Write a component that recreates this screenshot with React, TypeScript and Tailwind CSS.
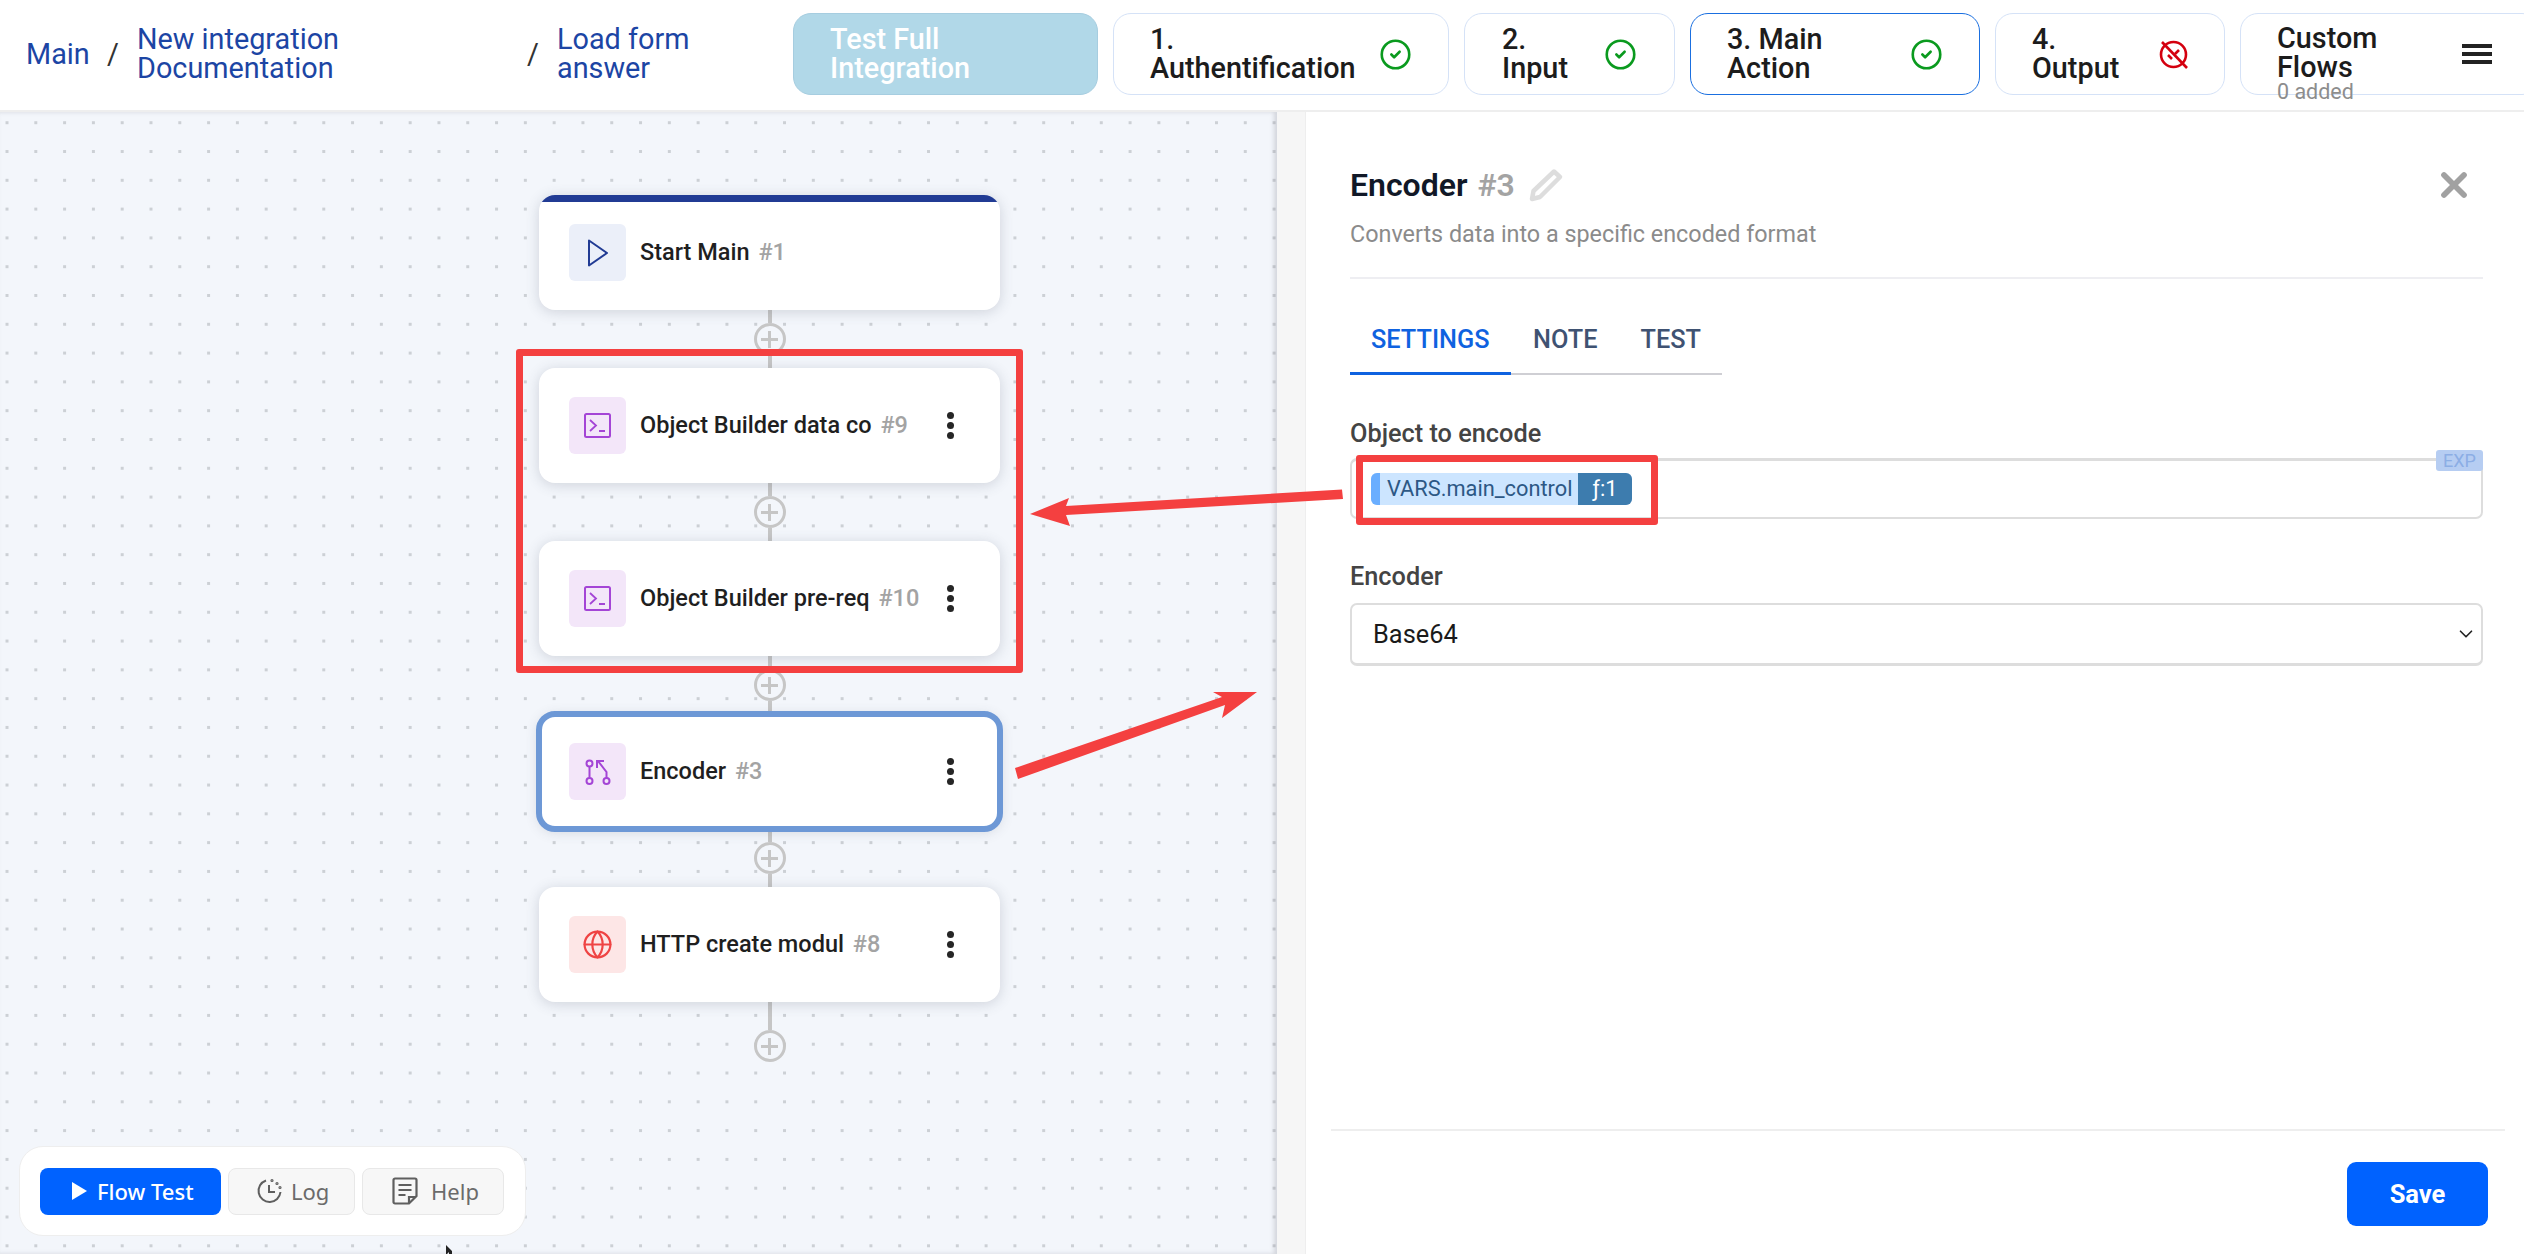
import { FC, ReactNode } from "react";
import { CircleCheck, Globe, X, ChevronDown } from "lucide-react";

const StepButton: FC<{
  className: string;
  active?: boolean;
  icon?: ReactNode;
  children: ReactNode;
}> = ({ className, active, icon, children }) => (
  <div
    className={`relative flex h-[82px] shrink-0 items-center justify-between rounded-[18px] border bg-white text-[#1c1c1c] ${
      active ? "border-[#1a6fe0]" : "border-[#d5e2f7]"
    } ${className}`}
  >
    <div className="text-[28.8px] font-medium leading-[28.8px]">{children}</div>
    {icon}
  </div>
);

const OkIcon = () => (
  <CircleCheck size={33} strokeWidth={1.9} className="text-[#0a9a1e]" />
);

const NoIcon = () => (
  <svg width="33" height="33" viewBox="0 0 33 33" fill="none" stroke="#d4000f" strokeWidth="2.6">
    <circle cx="16.5" cy="16.5" r="12.5" />
    <path d="M11 17l4 4M18 16l4-4" />
    <path d="M5 4l25 26" />
  </svg>
);

const Connector: FC<{ bottom?: boolean; top?: number }> = ({ bottom = true, top = 13 }) => (
  <div className="flex flex-col items-center">
    <div className="w-[4px] bg-[#c6c6c6]" style={{ height: top }} />
    <div className="relative flex h-[32px] w-[32px] items-center justify-center rounded-full border-[3.5px] border-[#c6c6c6] bg-[#f3f6fb]">
      <div className="h-[3px] w-[17px] bg-[#c6c6c6]" />
      <div className="absolute h-[17px] w-[3px] bg-[#c6c6c6]" />
    </div>
    {bottom && <div className="h-[13px] w-[4px] bg-[#c6c6c6]" />}
  </div>
);

const Kebab = () => (
  <div className="flex flex-col gap-[3px]">
    <div className="h-[7px] w-[7px] rounded-full bg-[#262626]" />
    <div className="h-[7px] w-[7px] rounded-full bg-[#262626]" />
    <div className="h-[7px] w-[7px] rounded-full bg-[#262626]" />
  </div>
);

const TerminalIcon = () => (
  <svg width="29" height="29" viewBox="0 0 29 29" fill="none" stroke="#a445d6" strokeWidth="2">
    <rect x="2" y="3" width="25" height="23" rx="1.5" />
    <path d="M7 9l6 5.5L7 20M16 20h6" strokeWidth="1.8" />
  </svg>
);

const BranchIcon = () => (
  <svg width="28" height="28" viewBox="0 0 28 28" fill="none" stroke="#a445d6" strokeWidth="2">
    <circle cx="5.500" cy="5.500" r="3" />
    <path d="M5.500 8.500v11" />
    <circle cx="5.500" cy="23" r="3" />
    <circle cx="22.500" cy="23" r="3" />
    <path d="M22.500 20V14L14 3" />
    <path d="M13 10V3h7" />
  </svg>
);

const FlowNode: FC<{
  tile: string;
  icon: ReactNode;
  name: string;
  num: string;
  kebab?: boolean;
  selected?: boolean;
  start?: boolean;
}> = ({ tile, icon, name, num, kebab = true, selected, start }) => (
  <div
    className={`relative flex h-[115px] w-[461px] items-center overflow-hidden rounded-[16px] bg-white pl-[30px] pr-[46px] shadow-[0_2px_14px_rgba(60,70,90,0.2)] ${
      selected ? "outline-6 -outline-offset-3 outline-[#6d98d6]" : ""
    }`}
  >
    {start && <div className="absolute inset-x-0 top-0 h-[7px] bg-[#213b94]" />}
    <div className={`flex h-[57px] w-[57px] shrink-0 items-center justify-center rounded-[6px] ${tile}`}>
      {icon}
    </div>
    <div className="ml-[14px] flex-1 whitespace-nowrap text-[23.5px] font-medium text-[#1f1f1f]">
      {name} <span className="ml-[3px] text-[#a3a3a3]">{num}</span>
    </div>
    {kebab && <Kebab />}
  </div>
);

const App: FC = () => {
  return (
    <div className="relative flex h-screen w-full flex-col overflow-hidden bg-white font-['Roboto',sans-serif]">
      {/* top bar */}
      <header className="flex h-[112px] shrink-0 items-center overflow-hidden border-b-2 border-[#eeeeee] pb-[2px] pl-[26px]">
        <div className="flex w-[767px] shrink-0 items-center text-[28.8px] leading-[28.8px] text-[#1c45a4]">
          <span className="w-[62px]">Main</span>
          <span className="ml-[19px] w-[30px] text-[#333]">/</span>
          <span className="w-[390px]">
            New integration
            <br />
            Documentation
          </span>
          <span className="w-[30px] text-[#333]">/</span>
          <span>
            Load form
            <br />
            answer
          </span>
        </div>
        <div className="flex gap-[15px]">
          <div className="flex h-[82px] w-[305px] shrink-0 items-center rounded-[18px] border border-[#a6cde0] bg-[#b1d8e8] pl-[36px] text-[28.8px] font-medium leading-[28.8px] text-white">
            <div>
              Test Full
              <br />
              Integration
            </div>
          </div>
          <StepButton className="w-[336px] pl-[36px] pr-[36px]" icon={<OkIcon />}>
            1.
            <br />
            Authentification
          </StepButton>
          <StepButton className="w-[211px] pl-[37px] pr-[37px]" icon={<OkIcon />}>
            2.
            <br />
            Input
          </StepButton>
          <StepButton className="w-[290px] pl-[36px] pr-[36px]" active icon={<OkIcon />}>
            3. Main
            <br />
            Action
          </StepButton>
          <StepButton className="w-[230px] pl-[36px] pr-[34px]" icon={<NoIcon />}>
            4.
            <br />
            Output
          </StepButton>
          <StepButton
            className="w-[300px] pl-[36px] pr-[47px]"
            icon={
              <div className="flex flex-col gap-[4.5px]">
                <div className="h-[3.5px] w-[30px] bg-[#222]" />
                <div className="h-[3.5px] w-[30px] bg-[#222]" />
                <div className="h-[3.5px] w-[30px] bg-[#222]" />
              </div>
            }
          >
            <div className="-translate-y-[1px]">
              Custom
              <br />
              Flows
            </div>
            <div className="absolute left-[36px] top-[67px] text-[21.5px] leading-[22px] font-normal text-[#8d8d8d]">
              0 added
            </div>
          </StepButton>
        </div>
      </header>

      <div className="flex min-h-0 flex-1">
        {/* canvas */}
        <main className="relative flex w-[1277px] shrink-0 flex-col bg-[#f3f6fb] bg-[radial-gradient(circle,#ccd0d5_1.6px,transparent_1.8px)] bg-size-[28.8px_28.8px] bg-position-[-7.4px_-3.7px] pl-[539px] pt-[83px] shadow-[inset_-3px_0_4px_rgba(120,120,130,0.25)]">
          <div className="flex w-[461px] flex-col items-center">
            <FlowNode
              start
              kebab={false}
              tile="bg-[#ebeff9]"
              name="Start Main"
              num="#1"
              icon={
                <svg width="24" height="28" viewBox="0 0 24 28" fill="none" stroke="#213b94" strokeWidth="2">
                  <path d="M3 1.5L21 14L3 26.5Z" strokeLinejoin="round" />
                </svg>
              }
            />
            <Connector />
            <FlowNode tile="bg-[#f3e6f9]" name="Object Builder data co" num="#9" icon={<TerminalIcon />} />
            <Connector />
            <FlowNode tile="bg-[#f3e6f9]" name="Object Builder pre-req" num="#10" icon={<TerminalIcon />} />
            <Connector />
            <FlowNode selected tile="bg-[#f3e6f9]" name="Encoder" num="#3" icon={<BranchIcon />} />
            <Connector />
            <FlowNode
              tile="bg-[#fde6e6]"
              name="HTTP create modul"
              num="#8"
              icon={<Globe size={31} strokeWidth={1.7} className="text-[#ef4444]" />}
            />
            <Connector bottom={false} top={28} />
          </div>

          {/* flow toolbar */}
          <div className="absolute bottom-[18px] left-[19px] flex h-[90px] w-[507px] items-center gap-[7px] rounded-[24px] border border-[#eeeeee] bg-white pl-[20px] font-['Noto_Sans',sans-serif] text-[22px]">
            <div className="flex h-[47px] w-[181px] items-center rounded-[8px] bg-[#0062ff] pl-[32px] font-medium text-white">
              <svg width="15" height="18" viewBox="0 0 15 18" fill="white">
                <path d="M0 0L15 9L0 18Z" />
              </svg>
              <span className="ml-[10px]">Flow Test</span>
            </div>
            <div className="flex h-[47px] w-[127px] items-center rounded-[8px] border border-[#e8e8e8] bg-[#f7f7f7] pl-[26px] text-[#6b6b6b]">
              <svg width="28" height="28" viewBox="0 0 28 28" fill="none" stroke="#5f5f5f" strokeWidth="2">
                <path d="M11 3.5A11 11 0 1 0 25.5 15" />
                <path d="M14 8v7h6" />
                <circle cx="17" cy="3.5" r="0.6" />
                <circle cx="22" cy="6.5" r="0.6" />
                <circle cx="25" cy="10.5" r="0.6" />
              </svg>
              <span className="ml-[8px]">Log</span>
            </div>
            <div className="flex h-[47px] w-[142px] items-center rounded-[8px] border border-[#e8e8e8] bg-[#f7f7f7] pl-[29px] text-[#6b6b6b]">
              <svg width="26" height="28" viewBox="0 0 26 28" fill="none" stroke="#5f5f5f" strokeWidth="2.2">
                <path d="M3 1.5H23a1.5 1.5 0 0 1 1.5 1.5V19L17 26.5H3A1.5 1.5 0 0 1 1.5 25V3A1.5 1.5 0 0 1 3 1.5Z" />
                <path d="M6.5 8h13M6.5 13h13M6.5 18h7" />
                <path d="M17 26V20h7" />
              </svg>
              <span className="ml-[13px]">Help</span>
            </div>
          </div>
        </main>

        {/* gutter */}
        <div className="w-[29px] shrink-0 border-r border-[#eeeeee] bg-[#f6f6f6]" />

        {/* settings panel */}
        <aside className="flex min-w-0 flex-1 flex-col bg-white">
          <div className="flex-1 pl-[44px] pr-[41px] pt-[53px]">
            <div className="flex items-center">
              <h2 className="text-[32px] leading-[40px] font-semibold text-[#111827]">
                Encoder <span className="ml-[2px] text-[#a3a3a3]">#3</span>
              </h2>
              <svg className="ml-[13px]" width="36" height="36" viewBox="0 0 36 36" fill="none" stroke="#dddddd" strokeWidth="4.500">
                <path d="M4 32l1.500-8L26 4.500l6 5.500L12 30Z" strokeLinejoin="round" />
              </svg>
              <X size={40} strokeWidth={3.4} className="ml-auto mr-[9px] text-[#a1a1a1]" />
            </div>
            <p className="mt-[14px] text-[23.35px] leading-[30px] text-[#8b8b8b]">
              Converts data into a specific encoded format
            </p>
            <div className="mt-[28px] h-[2px] bg-[#eeeef2]" />

            <div className="mt-[47px] flex w-[372px] border-b-2 border-[#cfcfd4] text-[25.3px] font-medium leading-[28px] text-[#3f5272]">
              <div className="-mb-[2px] w-[161px] border-b-[3px] border-[#0f62e0] pb-[18px] pl-[21px] text-[#0f62e0]">
                SETTINGS
              </div>
              <div className="ml-[22px]">NOTE</div>
              <div className="ml-[43px]">TEST</div>
            </div>

            <label className="mt-[45px] block text-[25.3px] leading-[28px] font-medium text-[#444444]">
              Object to encode
            </label>
            <div className="relative mt-[10px] flex h-[61px] items-center rounded-[7px] border-2 border-t-[3px] border-[#dddddd] pl-[19px]">
              <div className="flex h-[32px] w-[261px] items-stretch overflow-hidden rounded-[6px] bg-[#cce5ff] text-[21.8px] leading-[32px]">
                <div className="w-[9px] bg-[#6aaeff]" />
                <div className="w-[198px] whitespace-nowrap pl-[7px] text-[#2d5885]">VARS.main_control</div>
                <div className="flex-1 bg-[#3d7cae] text-center text-white">ƒ:1</div>
              </div>
              <div className="absolute -top-[11px] -right-[2px] flex h-[21px] w-[47px] items-center justify-center rounded-[3px] bg-[#b6cdf2] text-[18px] text-[#8caee5]">
                EXP
              </div>
            </div>

            <label className="mt-[44px] block text-[25.3px] leading-[28px] font-medium text-[#444444]">
              Encoder
            </label>
            <div className="mt-[12px] flex h-[63px] items-center justify-between rounded-[7px] border-2 border-b-[3px] border-[#dddddd] pl-[21px] pr-[4px] text-[25.4px] text-[#1a1a1a]">
              Base64
              <ChevronDown size={22} strokeWidth={1.8} className="text-[#222]" />
            </div>
          </div>

          <div className="ml-[25px] mr-[19px] flex h-[125px] shrink-0 items-start justify-end border-t-2 border-[#eeeeee] pr-[17px] pt-[31px]">
            <button className="h-[64px] w-[141px] rounded-[9px] bg-[#0062ff] text-[25.5px] font-bold text-white">
              Save
            </button>
          </div>
        </aside>
      </div>

      {/* red annotations drawn over the screenshot */}
      <div className="absolute left-[516px] top-[349px] h-[324px] w-[507px] rounded-[3px] border-[7px] border-[#f44040]" />
      <div className="absolute left-[1356px] top-[455px] h-[70px] w-[302px] rounded-[3px] border-[7px] border-[#f44040]" />
      <svg className="pointer-events-none absolute inset-0" width="2524" height="1254" fill="#f44040">
        <path d="M1342 489.500L1066 506L1069 498L1030 514L1070 526L1066 515L1343 499Z" />
        <path d="M1015 768L1222 697L1213 692L1257 692L1222 718L1225 705L1018 779Z" />
        <path d="M446 1245v9h1l2-2v2h3v-3l-6-6Z" fill="#222" />
      </svg>
    </div>
  );
};

export default App;
